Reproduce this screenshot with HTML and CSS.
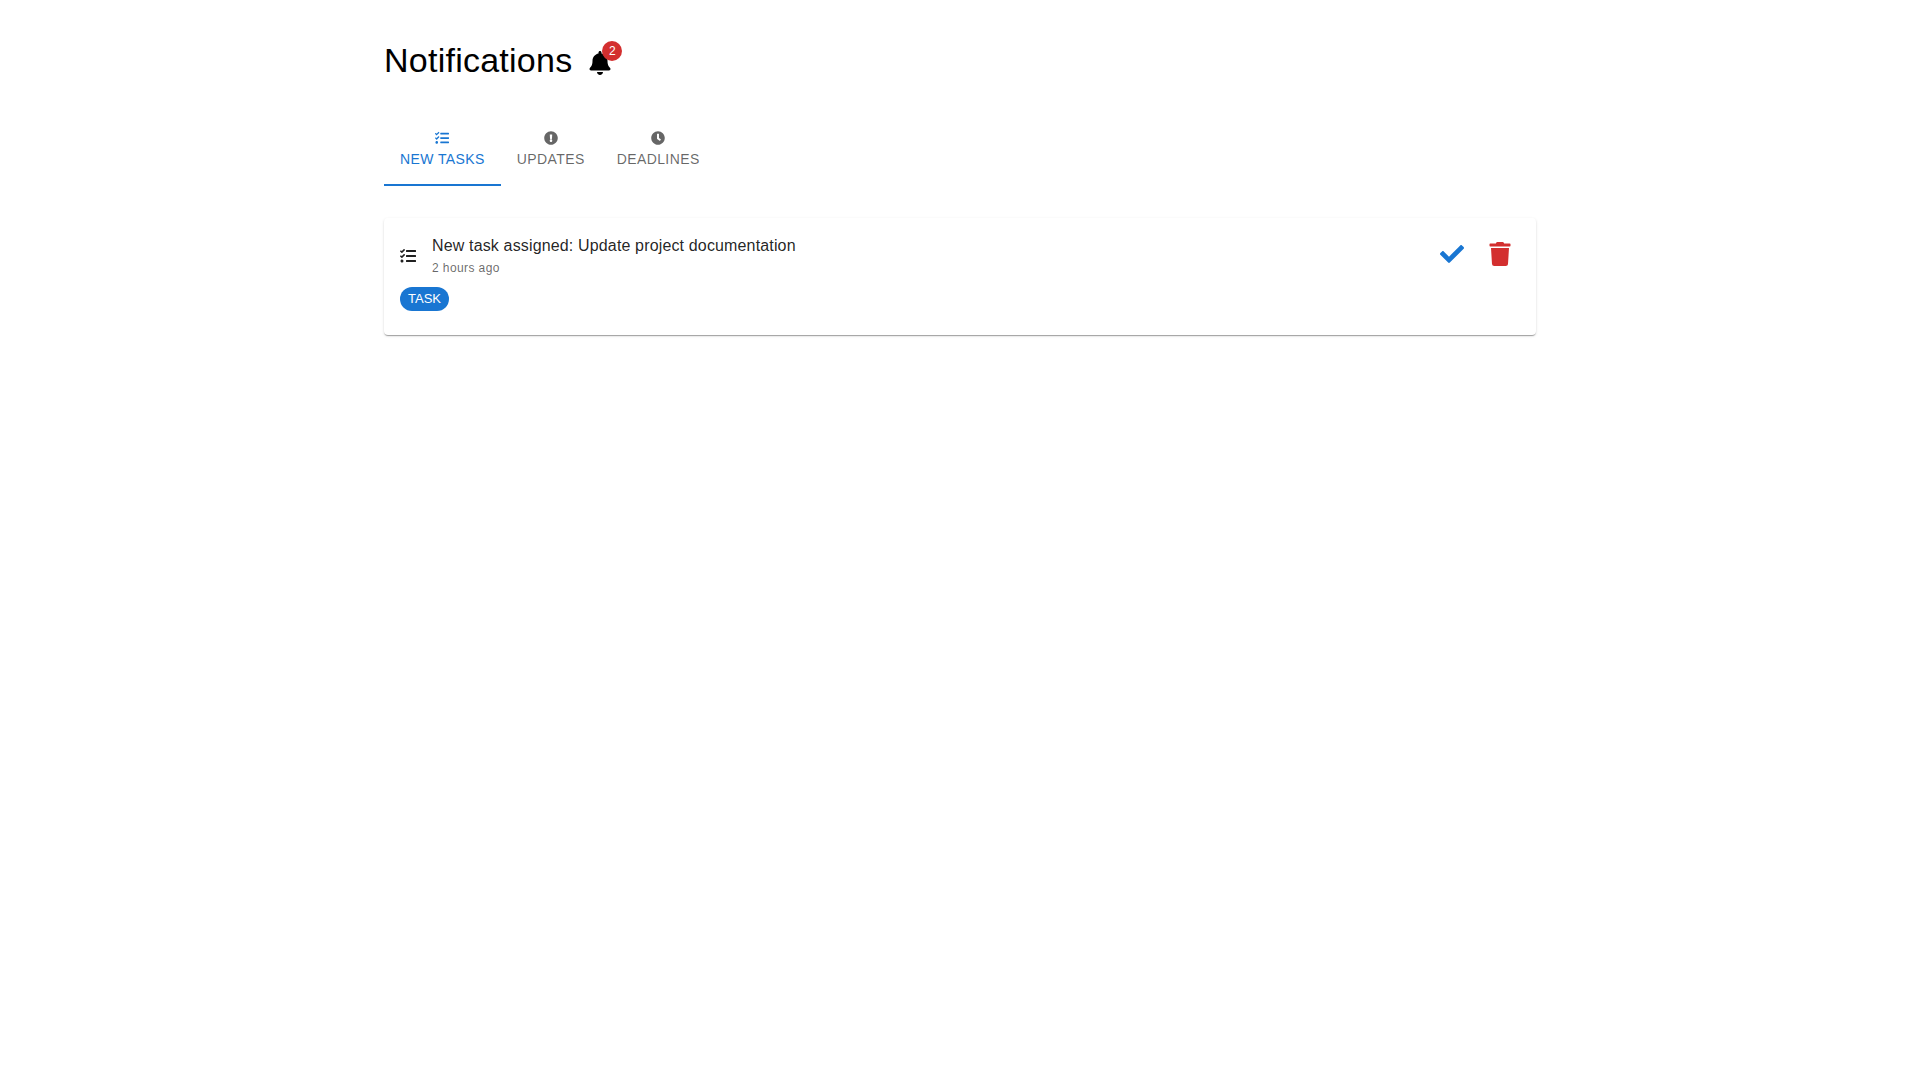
FILE: index.html
```html
<!DOCTYPE html>
<html lang="en">

<head>
    <meta charset="UTF-8">
    <meta name="viewport" content="width=device-width, initial-scale=1.0">
    <title>Notifications</title>
    <link rel="stylesheet" href="styles.css">
</head>

<body>
    <svg class="sprite" aria-hidden="true">
        <symbol id="icon-tasks" viewBox="0 0 512 512">
            <path d="M139.61 35.5a12 12 0 0 0-17 0L58.93 98.81l-22.7-22.12a12 12 0 0 0-17 0L3.53 92.41a12 12 0 0 0 0 17l47.59 47.4a12.78 12.78 0 0 0 17.61 0l15.59-15.62L156.52 69a12.09 12.09 0 0 0 .09-17zm0 159.19a12 12 0 0 0-17 0l-63.68 63.72-22.7-22.1a12 12 0 0 0-17 0L3.53 252a12 12 0 0 0 0 17L51 316.5a12.77 12.77 0 0 0 17.6 0l15.7-15.69 72.2-72.22a12 12 0 0 0 .09-16.9zM64 368c-26.49 0-48.59 21.5-48.59 48S37.53 464 64 464a48 48 0 0 0 0-96zm432 16H208a16 16 0 0 0-16 16v32a16 16 0 0 0 16 16h288a16 16 0 0 0 16-16v-32a16 16 0 0 0-16-16zm0-320H208a16 16 0 0 0-16 16v32a16 16 0 0 0 16 16h288a16 16 0 0 0 16-16V80a16 16 0 0 0-16-16zm0 160H208a16 16 0 0 0-16 16v32a16 16 0 0 0 16 16h288a16 16 0 0 0 16-16v-32a16 16 0 0 0-16-16z"/>
        </symbol>
    </svg>

    <main class="container">
        <header class="header">
            <h1>Notifications</h1>
            <span class="bell">
                <svg viewBox="0 0 448 512" aria-hidden="true"><path d="M224 512c35.32 0 63.97-28.65 63.97-64H160.03c0 35.35 28.65 64 63.97 64zm215.39-149.71c-19.32-20.76-55.47-51.99-55.47-154.29 0-77.7-54.48-139.9-127.94-155.16V32c0-17.67-14.32-32-31.98-32s-31.98 14.33-31.98 32v20.84C118.56 68.1 64.08 130.3 64.08 208c0 102.3-36.15 133.53-55.47 154.29-6 6.45-8.66 14.16-8.61 21.71.11 16.4 12.98 32 32.1 32h383.8c19.12 0 32-15.6 32.1-32 .05-7.55-2.61-15.27-8.61-21.71z"/></svg>
                <span class="badge">2</span>
            </span>
        </header>

        <div class="tabs" role="tablist">
            <button class="tab active" role="tab" aria-selected="true">
                <svg><use href="#icon-tasks"/></svg>
                New Tasks
            </button>
            <button class="tab" role="tab" aria-selected="false">
                <svg viewBox="0 0 512 512"><path d="M504 256c0 136.997-111.043 248-248 248S8 392.997 8 256C8 119.083 119.043 8 256 8s248 111.083 248 248zm-248 50c-25.405 0-46 20.595-46 46s20.595 46 46 46 46-20.595 46-46-20.595-46-46-46zm-43.673-165.346l7.418 136c.347 6.364 5.609 11.346 11.982 11.346h48.546c6.373 0 11.635-4.982 11.982-11.346l7.418-136c.375-6.874-5.098-12.654-11.982-12.654h-63.383c-6.884 0-12.356 5.78-11.981 12.654z"/></svg>
                Updates
            </button>
            <button class="tab" role="tab" aria-selected="false">
                <svg viewBox="0 0 512 512"><path d="M256 8C119 8 8 119 8 256s111 248 248 248 248-111 248-248S393 8 256 8zm57.1 350.1L224.900 294c-3.100-2.300-4.900-5.900-4.900-9.700V116c0-6.600 5.400-12 12-12h48c6.600 0 12 5.400 12 12v137.700l63.500 46.200c5.400 3.900 6.500 11.400 2.600 16.800l-28.200 38.800c-3.900 5.300-11.400 6.500-16.800 2.600z"/></svg>
                Deadlines
            </button>
        </div>

        <article class="card">
            <div class="card_row">
                <svg class="card_icon"><use href="#icon-tasks"/></svg>
                <div class="card_text">
                    <p class="title">New task assigned: Update project documentation</p>
                    <p class="time">2 hours ago</p>
                </div>
                <div class="actions">
                    <button class="mark_read" aria-label="Mark as read">
                        <svg viewBox="0 0 512 512"><path d="M173.898 439.404l-166.400-166.400c-9.997-9.997-9.997-26.206 0-36.204l36.203-36.204c9.997-9.998 26.207-9.998 36.204 0L192 312.690 432.095 72.596c9.997-9.997 26.207-9.997 36.204 0l36.203 36.204c9.997 9.997 9.997 26.206 0 36.204l-294.400 294.401c-9.998 9.997-26.207 9.997-36.204-.001z"/></svg>
                    </button>
                    <button class="delete" aria-label="Delete">
                        <svg viewBox="0 0 448 512"><path d="M432 32H312l-9.400-18.700A24 24 0 0 0 281.100 0H166.800a23.720 23.720 0 0 0-21.400 13.300L136 32H16A16 16 0 0 0 0 48v32a16 16 0 0 0 16 16h416a16 16 0 0 0 16-16V48a16 16 0 0 0-16-16zM53.200 467a48 48 0 0 0 47.900 45h245.800a48 48 0 0 0 47.900-45L416 128H32z"/></svg>
                    </button>
                </div>
            </div>
            <span class="chip">TASK</span>
        </article>
    </main>
</body>

</html>
```

FILE: styles.css
```css
* {
    box-sizing: border-box;
}

body {
    margin: 0;
    background-color: white;
    color: black;
    font-family: "Liberation Sans", Arial, sans-serif;
}

h1,
p {
    margin: 0;
    font-weight: 400;
}

svg {
    display: block;
    fill: currentColor;
}

button {
    border: none;
    background: none;
    font-family: inherit;
    cursor: pointer;
}

.sprite {
    display: none;
}

.container {
    max-width: 1200px;
    margin: 0 auto;
    padding: 40px 24px;
}

.header {
    display: flex;
    align-items: flex-start;
    gap: 16px;
    margin-bottom: 34px;
}

.header h1 {
    font-size: 34px;
    line-height: 40px;
    letter-spacing: 0.00735em;
}

.bell {
    position: relative;
    margin-top: 11px;
}

.bell svg {
    width: 24px;
    height: 24px;
}

.badge {
    position: absolute;
    top: -10px;
    right: -10px;
    width: 20px;
    height: 20px;
    border-radius: 10px;
    background-color: #d32f2f;
    color: white;
    font-size: 12px;
    line-height: 20px;
    text-align: center;
}

.tabs {
    display: flex;
    margin-bottom: 32px;
}

.tab {
    display: flex;
    flex-direction: column;
    align-items: center;
    gap: 6px;
    height: 72px;
    padding: 17px 16px;
    color: rgba(0, 0, 0, 0.6);
    font-size: 14px;
    line-height: 16px;
    letter-spacing: 0.02857em;
    text-transform: uppercase;
}

.tab.active {
    color: #1976d2;
    box-shadow: inset 0 -2px #1976d2;
}

.tab svg {
    width: 14px;
    height: 14px;
}

.card {
    padding: 16px 16px 24px;
    border-radius: 4px;
    color: rgba(0, 0, 0, 0.87);
    box-shadow: 0 2px 1px -1px rgba(0, 0, 0, 0.2), 0 1px 1px rgba(0, 0, 0, 0.14), 0 1px 3px rgba(0, 0, 0, 0.12);
}

.card_row {
    display: flex;
    align-items: center;
    gap: 16px;
    margin-bottom: 9px;
}

.card_icon {
    width: 16px;
    height: 16px;
}

.card_text {
    flex: 1;
}

.title {
    font-size: 16px;
    line-height: 24px;
    letter-spacing: 0.00938em;
}

.time {
    color: rgba(0, 0, 0, 0.6);
    font-size: 12px;
    line-height: 20px;
    letter-spacing: 0.03333em;
}

.actions {
    display: flex;
    align-self: flex-start;
    gap: 8px;
}

.actions button {
    padding: 8px;
}

.actions svg {
    width: 24px;
    height: 24px;
}

.mark_read {
    color: #1976d2;
}

.delete {
    color: #d32f2f;
}

.chip {
    display: block;
    width: fit-content;
    padding: 0 8px;
    border-radius: 12px;
    background-color: #1976d2;
    color: white;
    font-size: 13px;
    line-height: 24px;
}
```
